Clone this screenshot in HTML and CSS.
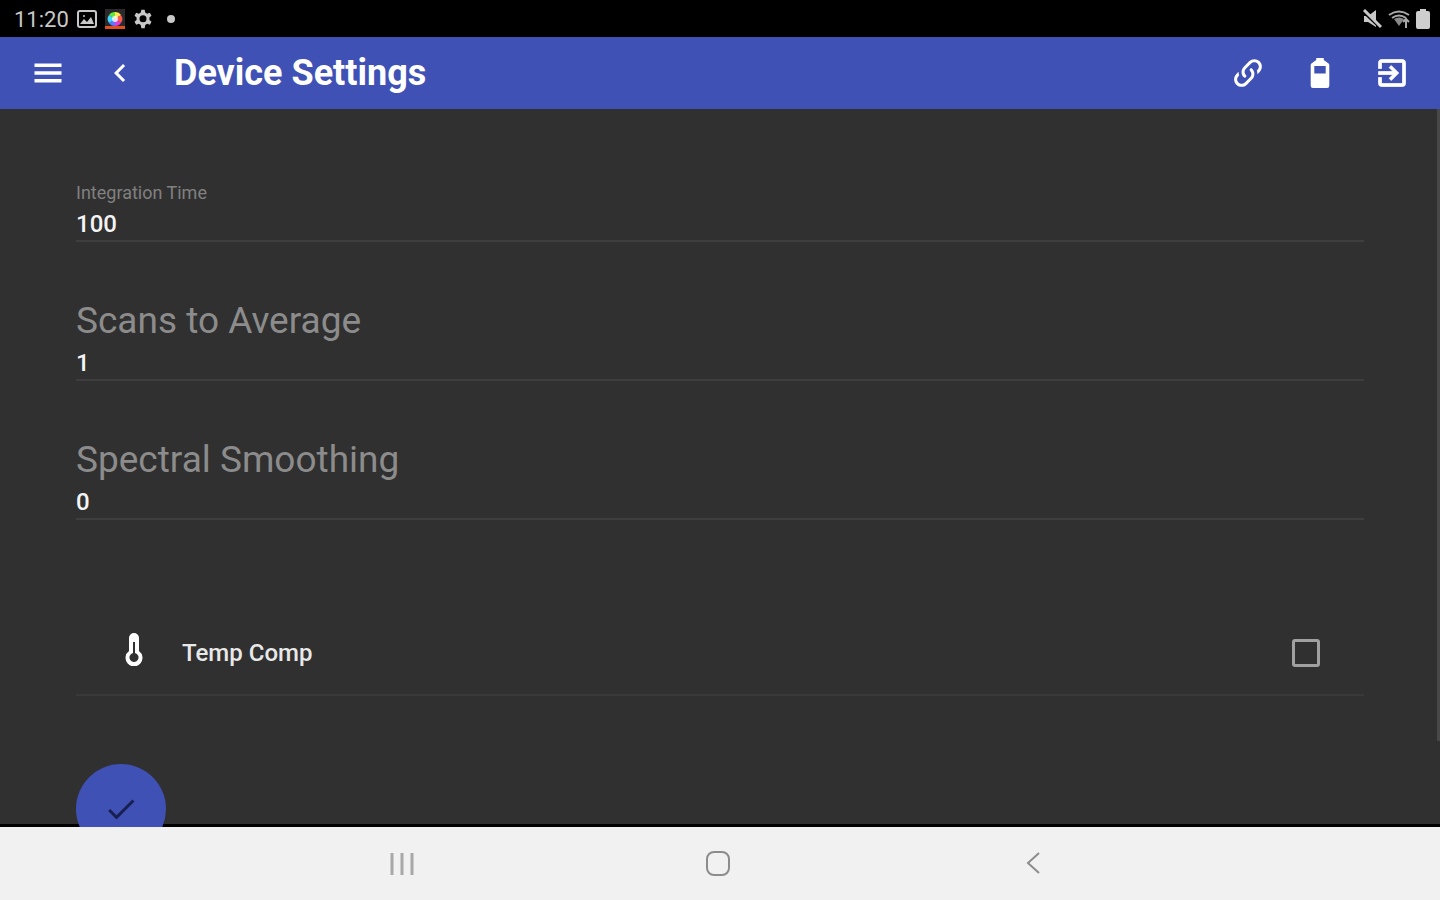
FILE: index.html
```html
<!DOCTYPE html>
<html lang="en">
<head>
  <meta charset="UTF-8" />
  <meta name="viewport" content="width=device-width, initial-scale=1.0"/>
  <title>Device Settings</title>
  <link rel="stylesheet" href="styles.css">
</head>
<body>

  <div class="status-bar">
    <span class="clock">11:20</span>
    <svg class="status-icon" viewBox="0 0 20 20" aria-hidden="true">
      <rect x="1" y="2" width="18" height="16" rx="2" fill="none" stroke="#c8c8c8" stroke-width="2"/>
      <path d="M3 15l4-5 3 3 4-5 3 7z" fill="#c8c8c8"/>
      <circle cx="7" cy="7" r="1" fill="#c8c8c8"/>
    </svg>
    <svg class="status-icon" viewBox="0 0 20 20" aria-hidden="true">
      <rect x="0" y="0" width="20" height="20" fill="#29292c"/>
      <rect x="0" y="17" width="20" height="3" fill="#e0501c"/>
      <path d="M10 10V3a7 7 0 0 1 6 3z" fill="#ffe84a"/>
      <path d="M10 10l6-4a7 7 0 0 1 0 8z" fill="#ff5a50"/>
      <path d="M10 10l6 4a7 7 0 0 1-6 3z" fill="#e03cdc"/>
      <path d="M10 10v7a7 7 0 0 1-6-3z" fill="#5878ff"/>
      <path d="M10 10l-6 4a7 7 0 0 1 0-8z" fill="#40d8ff"/>
      <path d="M10 10L4 6a7 7 0 0 1 6-3z" fill="#60e840"/>
      <circle cx="10" cy="10" r="3" fill="#fff" opacity="0.8"/>
    </svg>
    <svg class="status-icon" viewBox="0 0 24 24" aria-hidden="true">
      <path fill="#c8c8c8" fill-rule="evenodd" d="M10 1h4l.7 3.300 2.300 1.300 3.200-1 2 3.400-2.500 2.300v2.800l2.500 2.300-2 3.400-3.200-1-2.300 1.300L14 23h-4l-.7-3.900L7 17.800l-3.200 1-2-3.400 2.500-2.300v-2.800L1.800 8l2-3.400 3.200 1 2.300-1.300zM12 7.500a4.200 4.200 0 1 0 0 8.400 4.200 4.200 0 0 0 0-8.400z"/>
    </svg>
    <span class="dot"></span>
    <div class="status-right">
      <svg class="status-icon" viewBox="0 0 20 20" aria-hidden="true">
        <path d="M2 7h4l8-6v17l-8-5H2z" fill="#c8c8c8"/>
        <path d="M1 3l16 15" stroke="#000" stroke-width="2"/>
        <path d="M2 1l17 17" stroke="#c8c8c8" stroke-width="3"/>
      </svg>
      <svg class="status-icon wide" viewBox="0 0 22 20" aria-hidden="true">
        <path d="M1 6Q11-1 21 6M4 9Q11 4 18 9" fill="none" stroke="#a8a8a8" stroke-width="2"/>
        <path d="M6 10q5-3 10 0l-5 7z" fill="#888"/>
        <path d="M18 19v-8M15 13l3-3 3 3" fill="none" stroke="#a8a8a8" stroke-width="2"/>
      </svg>
      <svg class="status-icon battery" viewBox="0 0 14 20" aria-hidden="true">
        <path d="M4 0h6v2h2q2 0 2 2v14q0 2-2 2H2q-2 0-2-2V4q0-2 2-2h2z" fill="#cecece"/>
      </svg>
    </div>
  </div>

  <header class="toolbar">
    <button type="button" class="icon-btn" aria-label="Menu">
      <svg viewBox="0 0 24 24"><path d="M3 5.600h18v2.400H3zm0 5.200h18v2.400H3zm0 5.200h18v2.400H3z"/></svg>
    </button>
    <button type="button" class="icon-btn" aria-label="Back">
      <svg viewBox="0 0 24 24"><path d="M15.41 7.41L14 6l-6 6 6 6 1.410-1.410L10.830 12z"/></svg>
    </button>
    <h1>Device Settings</h1>
    <button type="button" class="icon-btn" aria-label="Connection">
      <svg viewBox="0 0 24 24"><path d="M10.59,13.41C11,13.8 11,14.44 10.59,14.83C10.2,15.22 9.56,15.22 9.17,14.83C7.22,12.88 7.22,9.71 9.17,7.76V7.76L12.71,4.22C14.66,2.27 17.83,2.27 19.78,4.22C21.73,6.17 21.73,9.34 19.78,11.29L18.29,12.78C18.3,11.96 18.17,11.14 17.89,10.36L18.36,9.88C19.54,8.71 19.54,6.81 18.36,5.64C17.19,4.46 15.29,4.46 14.12,5.64L10.59,9.17C9.41,10.34 9.41,12.24 10.59,13.41M13.41,9.17C13.8,8.78 14.44,8.78 14.83,9.17C16.78,11.12 16.78,14.29 14.83,16.24V16.24L11.29,19.78C9.34,21.73 6.17,21.73 4.22,19.78C2.27,17.83 2.27,14.66 4.22,12.71L5.71,11.22C5.7,12.04 5.83,12.86 6.11,13.65L5.64,14.12C4.46,15.29 4.46,17.19 5.64,18.36C6.81,19.54 8.71,19.54 9.88,18.36L13.41,14.83C14.59,13.66 14.59,11.76 13.41,10.59C13,10.2 13,9.56 13.41,9.17Z"/></svg>
    </button>
    <button type="button" class="icon-btn" aria-label="Battery">
      <svg viewBox="0 0 24 24"><path fill-rule="evenodd" d="M9.500 2h5v1.300L17.500 5.500q.700.500.700 1.300V20.500q0 1.500-1.500 1.500H7.300q-1.500 0-1.500-1.500V6.800q0-.800.700-1.300L9.500 3.300zM8.200 7.300v5h7.600v-5z"/></svg>
    </button>
    <button type="button" class="icon-btn" aria-label="Exit">
      <svg viewBox="0 0 24 24"><path stroke="#fff" stroke-width="0.5" d="M19,3H5C3.89,3 3,3.89 3,5V9H5V5H19V19H5V15H3V19A2,2 0 0,0 5,21H19A2,2 0 0,0 21,19V5C21,3.89 20.1,3 19,3M10.08,15.58L11.5,17L16.5,12L11.5,7L10.08,8.41L12.67,11H3V13H12.67L10.08,15.58Z"/></svg>
    </button>
  </header>

  <main>
    <form class="settings">
      <div class="field">
        <label class="small" for="integration">Integration Time</label>
        <input type="text" id="integration" value="100">
      </div>
      <div class="field">
        <label for="scans">Scans to Average</label>
        <input type="text" id="scans" value="1">
      </div>
      <div class="field">
        <label for="smoothing">Spectral Smoothing</label>
        <input type="text" id="smoothing" value="0">
      </div>

      <div class="check-row">
        <svg class="thermometer" viewBox="0 0 20 34" aria-hidden="true">
          <path fill-rule="evenodd" d="M10 1a5 5 0 0 1 5 5v13a8.500 8.500 0 1 1-10 0V6a5 5 0 0 1 5-5zM9 10v11a4.500 4.500 0 1 0 2 0V10z"/>
        </svg>
        <label for="temp-comp">Temp Comp</label>
        <input type="checkbox" id="temp-comp">
      </div>

      <button type="submit" class="fab" aria-label="Save">
        <svg viewBox="0 0 24 24"><path d="M9 16.170L4.830 12l-1.420 1.410L9 19 21 7l-1.410-1.410z"/></svg>
      </button>
    </form>
    <div class="scroll-thumb"></div>
  </main>

  <nav class="system-nav">
    <button type="button" aria-label="Recent apps">
      <svg viewBox="0 0 28 28"><path d="M4 3v22M14 3v22M24 3v22" stroke="#a8a8a8" stroke-width="3"/></svg>
    </button>
    <button type="button" aria-label="Home">
      <svg viewBox="0 0 28 28"><rect x="3" y="2" width="22" height="23" rx="7" stroke="#8c8c8c" stroke-width="2"/></svg>
    </button>
    <button type="button" aria-label="Back">
      <svg viewBox="0 0 28 28"><path d="M19 3L8 13l11 10" stroke="#8c8c8c" stroke-width="2"/></svg>
    </button>
  </nav>

</body>
</html>
```

FILE: styles.css
```css
* {
  box-sizing: border-box;
}

body {
  margin: 0;
  height: 100vh;
  display: flex;
  flex-direction: column;
  background: #303030;
  color: white;
  font-family: Roboto, "Liberation Sans", sans-serif;
  overflow: hidden;
}

button {
  padding: 0;
  border: 0;
  background: none;
  cursor: pointer;
}

svg {
  display: block;
}

.status-bar {
  flex: none;
  display: flex;
  align-items: center;
  gap: 8px;
  height: 37px;
  padding: 0 10px 0 14px;
  background: #000;
}

.clock {
  font-size: 22px;
  line-height: 28px;
  color: #c8c8c8;
  padding-top: 2px;
}

.status-icon {
  width: 20px;
  height: 20px;
}

.status-icon.wide {
  width: 22px;
}

.status-icon.battery {
  width: 14px;
}

.dot {
  width: 8px;
  height: 8px;
  margin-left: 6px;
  border-radius: 50%;
  background: #c8c8c8;
}

.status-right {
  display: flex;
  gap: 6px;
  margin-left: auto;
}

.toolbar {
  flex: none;
  display: flex;
  align-items: center;
  height: 72px;
  padding: 0 12px;
  background: #3f51b5;
}

.toolbar h1 {
  flex: 1;
  margin: 0;
  padding-left: 18px;
  font-size: 36px;
  line-height: 48px;
  font-weight: 700;
}

.icon-btn {
  width: 72px;
  height: 72px;
  display: flex;
  align-items: center;
  justify-content: center;
}

.icon-btn svg {
  width: 36px;
  height: 36px;
  fill: white;
}

main {
  position: relative;
  flex: 1;
  min-height: 0;
  overflow: hidden;
  background: linear-gradient(#000, #000) bottom / 100% 3px no-repeat;
}

.settings {
  padding: 47px 76px 0;
}

.field {
  display: flex;
  flex-direction: column;
  justify-content: flex-end;
  height: 86px;
  margin-bottom: 53px;
  border-bottom: 2px solid #3e3e3e;
}

.field label {
  font-size: 37px;
  line-height: 52px;
  color: #8c8c8c;
}

.field label.small {
  font-size: 18px;
  line-height: 30px;
  color: #808080;
}

.field input {
  width: 100%;
  height: 32px;
  padding: 0;
  border: 0;
  outline: 0;
  background: none;
  color: #f4f4f4;
  font: 500 24px/32px Roboto, "Liberation Sans", sans-serif;
}

.check-row {
  display: flex;
  align-items: center;
  height: 84px;
  margin-top: 92px;
  padding: 0 44px 0 48px;
  border-bottom: 2px solid #393939;
}

.thermometer {
  width: 20px;
  height: 34px;
  margin-bottom: 8px;
  fill: #fff;
}

.check-row label {
  flex: 1;
  padding-left: 38px;
  font-size: 24px;
  line-height: 32px;
  font-weight: 500;
  color: #e8e8e8;
}

.check-row input {
  appearance: none;
  width: 28px;
  height: 28px;
  margin: 0;
  border: 3px solid #a0a0a0;
  border-radius: 3px;
}

.check-row input:checked {
  background: #3f51b5;
}

.fab {
  width: 90px;
  height: 90px;
  margin-top: 68px;
  border-radius: 50%;
  background: #3f51b5;
  display: flex;
  align-items: center;
  justify-content: center;
}

.fab svg {
  width: 36px;
  height: 36px;
  fill: #172050;
}

.scroll-thumb {
  position: absolute;
  top: 0;
  right: 0;
  width: 3px;
  height: 88%;
  background: #484848;
}

.system-nav {
  flex: none;
  display: flex;
  justify-content: center;
  height: 73px;
  padding-right: 4px;
  background: #f1f1f1;
}

.system-nav button {
  flex: 0 0 22%;
  display: flex;
  align-items: center;
  justify-content: center;
}

.system-nav svg {
  width: 28px;
  height: 28px;
  fill: none;
}
```
